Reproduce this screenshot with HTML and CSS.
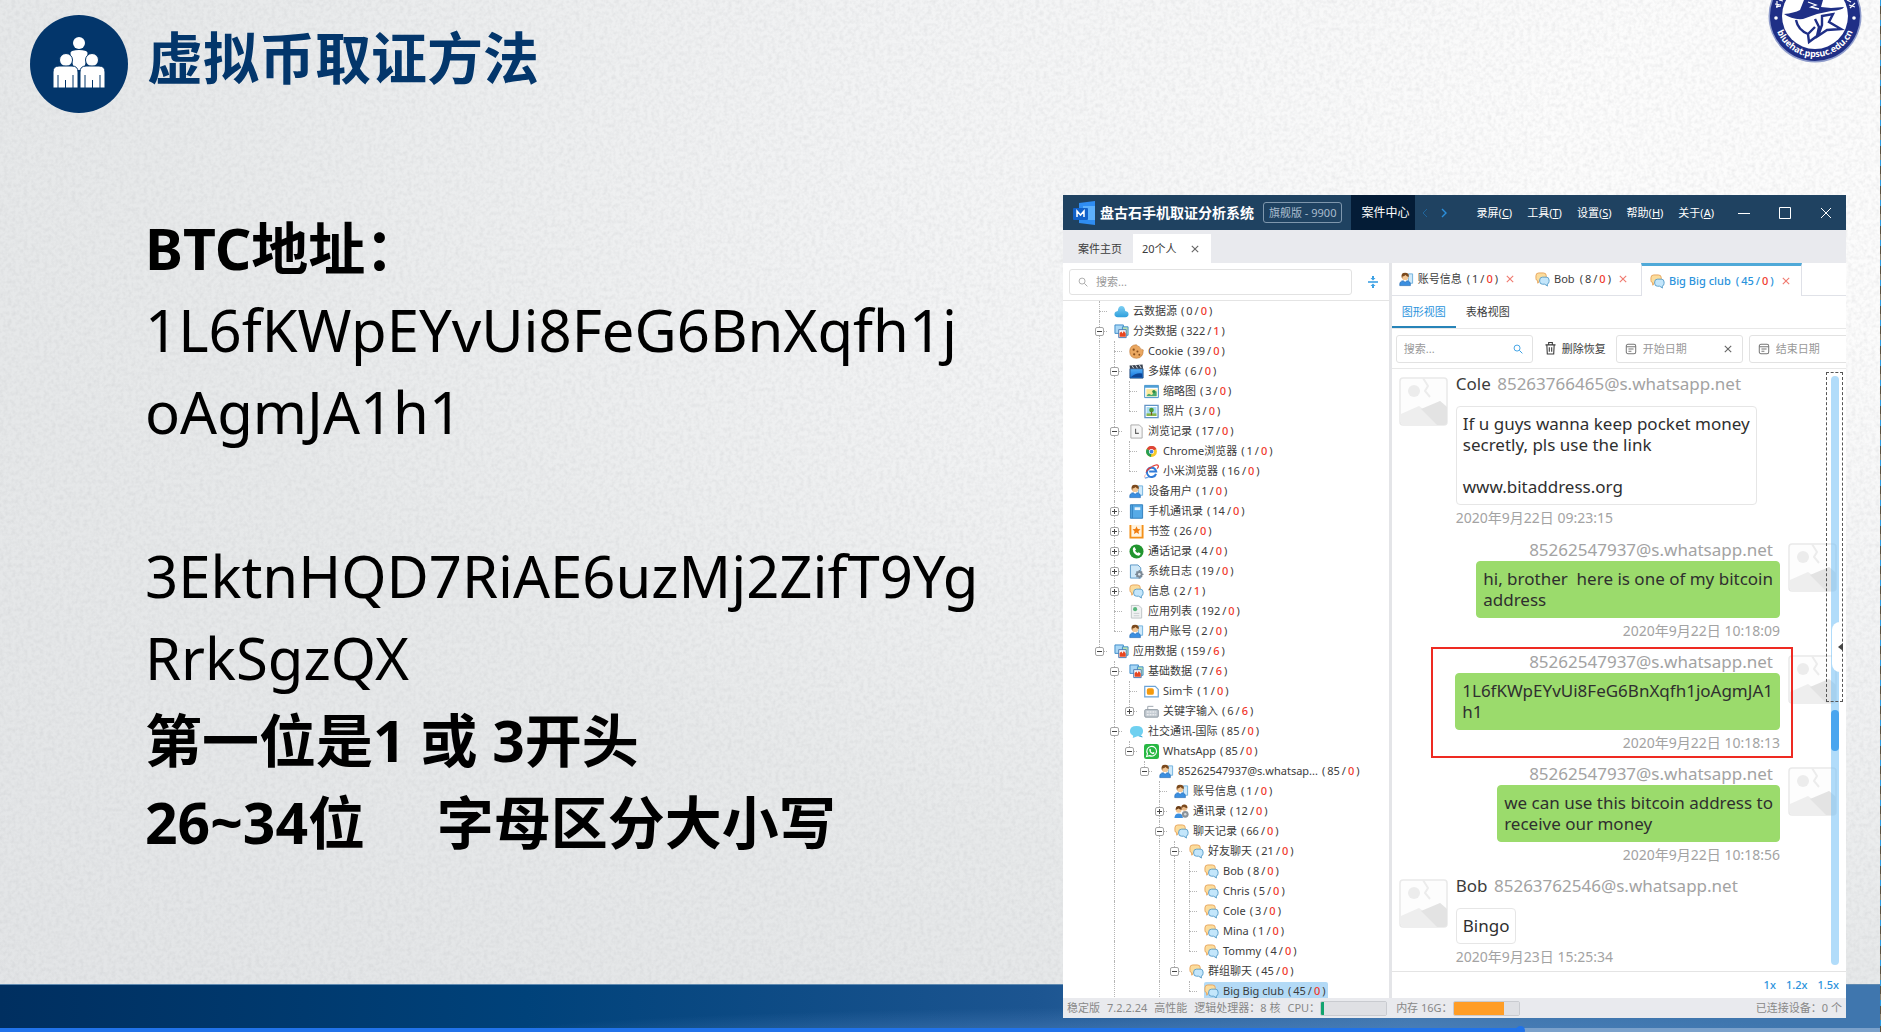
FILE: index.html
```html
<!DOCTYPE html>
<html lang="zh-CN">
<head>
<meta charset="utf-8">
<title>虚拟币取证方法</title>
<link rel="stylesheet" href="styles.css">
</head>
<body>
<svg class="sprite" aria-hidden="true">
  <defs>
    <linearGradient id="g-sky" x1="0" y1="0" x2="0" y2="1"><stop offset="0" stop-color="#7fd0f3"/><stop offset="1" stop-color="#2f9fdc"/></linearGradient>
    <linearGradient id="g-blue" x1="0" y1="0" x2="0" y2="1"><stop offset="0" stop-color="#55aef5"/><stop offset="1" stop-color="#1173dd"/></linearGradient>
  </defs>
  <symbol id="i-chat" viewBox="0 0 16 16"><path d="M4 1h5q3 0 3 3v3q0 2-2 2H5l-2 3-.3-3Q1 9 1 7V4q0-3 3-3z" fill="#fbdc9c" stroke="#e8a55c"/><path d="M8 5.500h4q3 0 3 3v1.500q0 2.500-2 2.800l.3 2.200-3-2H8q-3 0-3-3V8.500q0-3 3-3z" fill="#c3e6fb" stroke="#5b9fcb"/></symbol>
  <symbol id="i-user" viewBox="0 0 16 16"><path d="M10 2h4.500v10H10z" fill="#cfe9fa" stroke="#6fb1dd"/><circle cx="6.500" cy="5" r="3.600" fill="#f3c795"/><path d="M2.800 5.500Q2 .8 6.500.8t3.900 4.500Q8 5 7 3.300 5.500 5 3.600 4.800L3.500 7z" fill="#7b4a1e"/><path d="M.8 14.500q-.4-5 3.700-5.200L6.500 11l2-1.700q4 .2 3.700 5.200z" fill="#3b8fe0" stroke="#2169b4" stroke-width=".7"/></symbol>
  <symbol id="i-users" viewBox="0 0 16 16"><circle cx="11" cy="4" r="3.200" fill="#e9b987"/><path d="M7.800 4.500Q7.500.5 11 .5t3.300 4Q11 4 10.500 3z" fill="#7b4a1e"/><circle cx="5" cy="6" r="3.200" fill="#f3c795"/><path d="M1.800 6.500Q1.500 2 5 2t3.300 4.200Q6 6 5 4.800z" fill="#6b3d16"/><path d="M.5 15q0-5 4.500-5t4.500 5z" fill="#3b8fe0"/><circle cx="12" cy="11" r="3.600" fill="#8b9299"/><circle cx="12" cy="11" r="1.300" fill="#d4d8dc"/></symbol>
  <symbol id="i-cloud" viewBox="0 0 16 16"><path d="M4 14q-3.500 0-3.500-3T4 7.500Q4.500 2 8 2t4 5.500q3.500.5 3.500 3.500t-3.500 3z" fill="url(#g-sky)"/></symbol>
  <symbol id="i-data" viewBox="0 0 16 16"><path d="M1 1h9v9H1z" fill="#a9d7f5" stroke="#3c8ccb"/><path d="M9 3h6v9H9z" fill="#b9e3b5" stroke="#3c8ccb"/><path d="M5 6h8v8.500H5z" fill="#f3f6fa" stroke="#4a78b0"/><path d="M6 13.500V9.500L8 8l1 2 1.500-2.500L12.500 10v3.500z" fill="#e8461f"/></symbol>
  <symbol id="i-cookie" viewBox="0 0 16 16"><path d="M8 .8q1 2 3 2 .5 3 4.200 3.500 0 8.700-7.200 8.900Q.8 15 .8 8T8 .8z" fill="#eaa760" stroke="#c27a35" stroke-width=".7"/><g fill="#8a4f1c"><circle cx="5" cy="6" r="1.200"/><circle cx="9" cy="8" r="1.100"/><circle cx="5.500" cy="11" r="1.200"/><circle cx="11" cy="11.500" r="1"/></g></symbol>
  <symbol id="i-media" viewBox="0 0 16 16"><path d="M1 5h14v10H1z" fill="url(#g-blue)" stroke="#234a7c"/><path d="M.6 1.500 14.500.6 15 4.700H1z" fill="#3a4350"/><path d="M3 1.400 5 4.500M7 1.200l2 3.300M11 1l2 3.300" stroke="#dfe5ec"/><path d="M2 14q5-5 12-4v4z" fill="#0d4597"/></symbol>
  <symbol id="i-thumb" viewBox="0 0 16 16"><path d="M.7 1.500h14.600v13H.7z" fill="#fff" stroke="#3f8dc4"/><path d="M.7 1.500h14.600V4H.7z" fill="#4f9fd6"/><path d="M2.500 5.500h11v7.500h-11z" fill="#fbe99a"/><path d="M2.500 13q2-4 4-2t3-1 4-2v5z" fill="#4cab6e"/><circle cx="10.500" cy="8" r="1.700" fill="#2d8a44"/></symbol>
  <symbol id="i-photo" viewBox="0 0 16 16"><path d="M1 1.500h14v13H1z" fill="#fff" stroke="#6193c6" stroke-width="1.400"/><path d="M2.700 3.200h10.600v9.600H2.700z" fill="#a8dcf3"/><path d="M2.700 10h10.600v2.800H2.700z" fill="#88b84c"/><circle cx="8" cy="6.500" r="2.500" fill="#4d9b35"/><path d="M7.400 8h1.200v4H7.400z" fill="#7b5426"/></symbol>
  <symbol id="i-history" viewBox="0 0 16 16"><path d="M2 1h9l3 3v11H2z" fill="#f6f6f6" stroke="#a9a9a9"/><path d="M7 5v5h3.500" fill="none" stroke="#666" stroke-width="1.200"/></symbol>
  <symbol id="i-chrome" viewBox="0 0 16 16"><circle cx="8" cy="8" r="5.800" fill="#f7c928"/><path d="M8 8 2.900 5.200A5.800 5.800 0 0 1 13.200 5.400z" fill="#dd4437"/><path d="M8 8 2.900 5.200A5.800 5.800 0 0 0 7.500 13.800z" fill="#259e55"/><path d="M3 5.100A5.800 5.800 0 0 1 13.200 5.400H8z" fill="#dd4437"/><circle cx="8" cy="8" r="2.700" fill="#fff"/><circle cx="8" cy="8" r="2" fill="#3f7fe8"/></symbol>
  <symbol id="i-ie" viewBox="0 0 16 16"><path d="M12.800 10.500A5 5 0 1 1 13 8H5.500" fill="none" stroke="#2f7bd8" stroke-width="2.200"/><path d="M1 15Q-.5 11 5 6L10 2Q4 3 2.500 7T1 15z" fill="#e23c36"/><path d="M9 2.500Q14 0 15 1.500T14 5" stroke="#e23c36" stroke-width="1.300" fill="none"/><path d="M1 15q3 0 5-2" stroke="#2f7bd8" fill="none"/></symbol>
  <symbol id="i-book" viewBox="0 0 16 16"><path d="M1.500.8h13v14.400h-13z" fill="#56aae6" stroke="#2d7dbd"/><path d="M3.500 1v14" stroke="#2d7dbd"/><path d="M6 3.500h6v3H6z" fill="#e9f5fd"/></symbol>
  <symbol id="i-bookmark" viewBox="0 0 16 16"><path d="M1.500 1v13.500h13V1" fill="#fff3df" stroke="#f39019" stroke-width="2"/><path d="M8 2.500l1.300 2.800 3 .3-2.200 2 .6 3L8 9.100l-2.700 1.500.6-3-2.200-2 3-.3z" fill="#f07d10"/></symbol>
  <symbol id="i-call" viewBox="0 0 16 16"><circle cx="8" cy="8" r="7.500" fill="#21952f"/><path d="M4.500 4l1.500-.8L7.500 6 6.400 7q1 2 2.800 2.700l1-1 2.300 1.500q-.5 2.300-2.400 2.200Q4.500 11.500 4 5.600z" fill="#fff"/></symbol>
  <symbol id="i-log" viewBox="0 0 16 16"><path d="M1.500 1h8l3 3v11h-11z" fill="#cfe8f8" stroke="#5795c4"/><circle cx="11" cy="11" r="3.500" fill="#7c8996"/><path d="M11 6.500v9M6.500 11h9M8 8l6 6M14 8l-6 6" stroke="#7c8996" stroke-width="1.400"/><circle cx="11" cy="11" r="1.400" fill="#dfe6ec"/></symbol>
  <symbol id="i-app" viewBox="0 0 16 16"><path d="M2.500 1.500h8l3 3V15h-11z" fill="#f0f2f2" stroke="#bcc2c4"/><circle cx="6.500" cy="5.500" r="2.200" fill="#59b67c"/><path d="M5 10h6M5 12.500h6" stroke="#c8cdd0"/></symbol>
  <symbol id="i-sim" viewBox="0 0 16 16"><path d="M.8 2.500H12l3.200 3.300v8H.8z" fill="#fff" stroke="#6ba4d8" stroke-width="1.300"/><rect x="3" y="4.500" width="7.500" height="7" rx="2" fill="#f59a0c"/></symbol>
  <symbol id="i-keys" viewBox="0 0 16 16"><path d="M4 6V2.500h6" stroke="#9aa3ac" fill="none"/><rect x=".8" y="6" width="14.400" height="8" rx="1" fill="#c5ccd3" stroke="#8b959f"/><path d="M3 8.500h10M3 11.500h10" stroke="#fff" stroke-dasharray="2 1"/></symbol>
  <symbol id="i-social" viewBox="0 0 16 16"><path d="M8 2q7 0 7 5.500T9 13l-5 2 .5-2.600Q1 11 1 7.500 1 2 8 2z" fill="#6fd0f0"/><path d="M12 12q3 1 2.500 2.500L10 13z" fill="#3fb0dc"/></symbol>
  <symbol id="i-wa" viewBox="0 0 16 16"><rect width="16" height="16" rx="2.500" fill="#27b843"/><path d="M2.800 13.300l.9-3A5.200 5.200 0 1 1 6 12.400z" fill="none" stroke="#fff" stroke-width="1.200"/><path d="M5.800 5.200l1-.2.8 1.700-.6.8q.7 1.200 2 1.700l.8-.7 1.500.9q-.3 1.500-1.800 1.400Q6 10 5.600 6.400z" fill="#fff"/></symbol>
  <symbol id="i-search" viewBox="0 0 16 16"><circle cx="6.500" cy="6.500" r="4.800" fill="none" stroke="currentColor" stroke-width="1.500"/><path d="M10.200 10.200 15 15" stroke="currentColor" stroke-width="1.600"/></symbol>
  <symbol id="i-x" viewBox="0 0 10 10"><path d="M1 1l8 8M9 1 1 9" stroke="currentColor" stroke-width="1.400"/></symbol>
  <symbol id="i-cal" viewBox="0 0 14 14"><rect x="1.500" y="1.500" width="11" height="11" rx="2" fill="none" stroke="currentColor" stroke-width="1.200"/><path d="M1.500 4.500h11M4 7h6M4 9.500h3.500" stroke="currentColor" stroke-width="1.200"/></symbol>
  <symbol id="i-avatar" viewBox="0 0 49 49"><rect x="1" y="1" width="47" height="47" rx="3" fill="#fbfbfb" fill-opacity=".6" stroke="#e9e9e9" stroke-width="1.500"/><circle cx="15" cy="14" r="6" fill="#ececec"/><path d="M2 37l18-8 8 6 13-11 7 6v15q0 3-3 3H4q-2 0-2-3z" fill="#eeeeee"/><path d="M22 32l19-8 7 6v15q0 3-3 3h-7z" fill="#e3e3e3"/><path d="M24 1l5 8-3 5 5 6" fill="none" stroke="#ececec" stroke-width="2"/></symbol>
</svg>

<main class="slide">
  <svg class="grain" aria-hidden="true"><filter id="noise"><feTurbulence type="fractalNoise" baseFrequency="0.25" numOctaves="3" seed="4"/><feColorMatrix values="0 0 0 0 0.45  0 0 0 0 0.46  0 0 0 0 0.48  1.600 0 0 0 -0.600"/></filter><rect width="100%" height="100%" filter="url(#noise)"/></svg>

  <section class="lesson">
    <header class="heading">
      <svg class="badge" viewBox="0 0 98 98" aria-hidden="true">
        <circle cx="49" cy="49" r="49" fill="#03366b"/>
        <g fill="#fff">
          <circle cx="49" cy="28" r="6"/><path d="M42 36q7-2 14 0 2 1 1.500 3L55 50l-2 5h-8l-2-5-2.500-11q-.5-2 1.500-3z"/>
          <g stroke="#03366b" stroke-width="1"><circle cx="36" cy="45" r="6.500"/><circle cx="62" cy="45" r="6.500"/>
          <path d="M23 73V57q0-6 6-6h13q6 0 6 6v16z"/><path d="M50 73V57q0-6 6-6h13q6 0 6 6v16z"/></g>
        </g>
        <path d="M28 60v13M43 60v13M35.500 65v8M55 60v13M70 60v13M62.500 65v8" stroke="#03366b" stroke-width="1"/>
      </svg>
      <h1>虚拟币取证方法</h1>
    </header>
    <div class="notes">
      <p class="strong">BTC地址：</p>
      <p>1L6fKWpEYvUi8FeG6BnXqfh1j<br>oAgmJA1h1</p>
      <p class="gap">3EktnHQD7RiAE6uzMj2ZifT9Yg<br>RrkSgzQX</p>
      <p class="strong">第一位是1 或 3开头</p>
      <p class="strong">26~34位　&nbsp;字母区分大小写</p>
    </div>
  </section>

  <svg class="seal" viewBox="0 0 94 64" role="img" aria-label="bluehat.ppsuc.edu.cn">
    <circle cx="47" cy="16" r="46.500" fill="#8f9ccb"/><circle cx="47" cy="16" r="45" fill="#1f2f86"/><circle cx="47" cy="16" r="33" fill="#fff"/>
    <path id="ring" d="M6 16A41 41 0 0 0 88 16" fill="none"/>
    <text class="ring-text"><textPath href="#ring" startOffset="50%" text-anchor="middle">bluehat.ppsuc.edu.cn</textPath></text>
    <circle cx="8" cy="18" r="1.800" fill="#fff"/><circle cx="86" cy="18" r="1.800" fill="#fff"/>
    <path d="M7 4l6 1M8 7l5-1M9 1v7M81 5l6 2M82 8l5-5M11 0l4 1M79 0l4 2" stroke="#fff" stroke-width="1.200"/>
    <path d="M16 14q10-1 16-4l4-10h19l-2 7 10 1 13-1q-1 3-13 4l-14 3-14 5q-11 1-19-5z" fill="#1f2f86"/>
    <path d="M40 2l8 3-5 2 8 2" stroke="#fff" stroke-width="1.300" fill="none"/>
    <path d="M28 20q2 10 12 14l1 8 8-6 2-9-4-8M54 16l11-2-4 8 12 7-14 1-9 6 4-11zM40 34l7-7" fill="none" stroke="#1f2f86" stroke-width="2.400"/>
  </svg>

  <section class="app" aria-label="盘古石手机取证分析系统">
    <header class="titlebar">
      <svg class="app-logo" viewBox="0 0 24 24" aria-hidden="true"><path d="M6 2l16-2v24l-16-2z" fill="#2f8df2"/><path d="M10 5h12v14H10z" fill="#5db0fb"/><rect y="7" width="15" height="12" rx="1" fill="#1161c9"/><path d="M4 16V10l3.500 4L11 10v6" fill="none" stroke="#fff" stroke-width="1.500"/></svg>
      <strong class="app-name">盘古石手机取证分析系统</strong>
      <span class="edition">旗舰版 - 9900</span>
      <button class="center">案件中心</button>
      <button class="nav dim" aria-label="后退"><svg viewBox="0 0 6 10"><path d="M5 1 1 5l4 4" fill="none" stroke="currentColor"/></svg></button>
      <button class="nav" aria-label="前进"><svg viewBox="0 0 6 10"><path d="M1 1l4 4-4 4" fill="none" stroke="currentColor" stroke-width="1.400"/></svg></button>
      <nav class="menu">
        <button>录屏(<u>C</u>)</button><button>工具(<u>T</u>)</button><button>设置(<u>S</u>)</button><button>帮助(<u>H</u>)</button><button>关于(<u>A</u>)</button>
      </nav>
      <div class="controls">
        <button aria-label="最小化"><svg viewBox="0 0 12 12"><path d="M0 6.500h12" stroke="currentColor"/></svg></button>
        <button aria-label="最大化"><svg viewBox="0 0 12 12"><path d="M.5.5h11v11H.5z" fill="none" stroke="currentColor"/></svg></button>
        <button aria-label="关闭"><svg viewBox="0 0 12 12"><path d="M1 1l10 10M11 1 1 11" stroke="currentColor"/></svg></button>
      </div>
    </header>
    <div class="casebar">
      <button class="case">案件主页</button>
      <button class="case on">20个人 <svg class="x"><use href="#i-x"/></svg></button>
    </div>

    <div class="panes">
      <aside class="left">
        <div class="finder">
          <label class="field"><svg class="ic-s"><use href="#i-search"/></svg><input type="text" placeholder="搜索..." aria-label="搜索"></label>
          <button class="split" aria-label="折叠"><svg viewBox="0 0 12 14"><path d="M1 7h10" stroke="currentColor" stroke-width="1.600"/><path d="M6 1v3M6 13v-3" stroke="currentColor" stroke-width="2"/><path d="M3.500 3h5L6 5.500zM3.500 11h5L6 8.500z" fill="currentColor"/></svg></button>
        </div>
        <ul class="tree" id="tree"></ul>
      </aside>

      <section class="right">
        <div class="tabs">
          <button class="tab"><svg class="ic"><use href="#i-user"/></svg>账号信息<span class="count">(<span>1</span>/<b>0</b>)</span><svg class="x"><use href="#i-x"/></svg></button>
          <button class="tab"><svg class="ic"><use href="#i-chat"/></svg>Bob<span class="count">(<span>8</span>/<b>0</b>)</span><svg class="x"><use href="#i-x"/></svg></button>
          <button class="tab on"><svg class="ic"><use href="#i-chat"/></svg>Big Big club<span class="count">(<span>45</span>/<b>0</b>)</span><svg class="x"><use href="#i-x"/></svg></button>
        </div>
        <div class="views"><button class="view on">图形视图</button><button class="view">表格视图</button></div>
        <div class="tools">
          <label class="field query"><input type="text" placeholder="搜索..." aria-label="搜索消息"><svg class="ic-s"><use href="#i-search"/></svg></label>
          <button class="restore"><svg viewBox="0 0 12 14"><path d="M.5 3h11M4 2.500v-2h4v2M2 3l.5 10h7L10 3M4.700 5.500v5M7.300 5.500v5" fill="none" stroke="currentColor" stroke-width="1.200"/></svg>删除恢复</button>
          <label class="field date"><svg class="cal"><use href="#i-cal"/></svg><input type="text" placeholder="开始日期" aria-label="开始日期"><svg class="x"><use href="#i-x"/></svg></label>
          <label class="field date"><svg class="cal"><use href="#i-cal"/></svg><input type="text" placeholder="结束日期" aria-label="结束日期"><svg class="x"><use href="#i-x"/></svg></label>
        </div>
        <div class="chat">
          <article class="msg in">
            <svg class="avatar"><use href="#i-avatar"/></svg>
            <div class="body"><div class="from">Cole <span>85263766465@s.whatsapp.net</span></div>
            <p class="bubble">If u guys wanna keep pocket money<br>secretly, pls use the link<br><br>www.bitaddress.org</p><time>2020年9月22日 09:23:15</time></div>
          </article>
          <article class="msg out">
            <div class="body"><div class="from"><span>85262547937@s.whatsapp.net</span></div>
            <p class="bubble">hi, brother &nbsp;here is one of my bitcoin<br>address</p><time>2020年9月22日 10:18:09</time></div>
            <svg class="avatar"><use href="#i-avatar"/></svg>
          </article>
          <article class="msg out marked">
            <div class="body"><div class="from"><span>85262547937@s.whatsapp.net</span></div>
            <p class="bubble">1L6fKWpEYvUi8FeG6BnXqfh1joAgmJA1<br>h1</p><time>2020年9月22日 10:18:13</time></div>
            <svg class="avatar"><use href="#i-avatar"/></svg>
          </article>
          <article class="msg out">
            <div class="body"><div class="from"><span>85262547937@s.whatsapp.net</span></div>
            <p class="bubble">we can use this bitcoin address to<br>receive our money</p><time>2020年9月22日 10:18:56</time></div>
            <svg class="avatar"><use href="#i-avatar"/></svg>
          </article>
          <article class="msg in">
            <svg class="avatar"><use href="#i-avatar"/></svg>
            <div class="body"><div class="from">Bob <span>85263762546@s.whatsapp.net</span></div>
            <p class="bubble">Bingo</p><time>2020年9月23日 15:25:34</time></div>
          </article>
          <div class="scroll"><i class="notch"></i><i class="thumb"></i></div>
          <div class="focus"></div>
          <svg class="caret" viewBox="0 0 6 8"><path d="M5 0v8L0 4z" fill="#444"/></svg>
        </div>
        <div class="zoom"><button>1x</button><button>1.2x</button><button>1.5x</button></div>
      </section>
    </div>

    <footer class="status">
      <span>稳定版</span><span>7.2.2.24</span><span>高性能</span>
      <label for="cpu" class="wide">逻辑处理器：8 核</label><label for="cpu">CPU：</label><progress id="cpu" class="cpu" max="100" value="5"></progress>
      <label for="mem">内存 16G：</label><progress id="mem" class="mem" max="100" value="78"></progress>
      <span class="devices">已连接设备：0 个</span>
    </footer>
  </section>

  <div class="band"></div>
  <input class="seek" type="range" min="0" max="100" value="81" aria-label="播放进度">
  <div class="edge"></div>
</main>
<script src="tree.js"></script>
</body>
</html>
```
FILE: styles.css
```css
* { box-sizing: border-box; }
body { margin: 0; font-family: "Noto Sans", "Noto Sans CJK SC", sans-serif; color: #3c3c3c; }
button, input { font: inherit; color: inherit; border: 0; background: none; padding: 0; margin: 0; outline: 0; }
button { display: inline-flex; align-items: center; white-space: nowrap; }
p, h1, ul { margin: 0; padding: 0; }
svg { flex: none; }
.sprite { position: absolute; width: 0; height: 0; }

/* slide */
.slide {
  display: grid;
  grid-template-columns: 1063fr 783fr 35fr;
  grid-template-rows: minmax(0, 1fr) 44px 4px;
  height: 100vh;
  min-height: 900px;
  overflow: hidden;
  position: relative;
  background: radial-gradient(ellipse at 105% 15%, #fcfcfc 15%, #f2f3f4 40%, #e7e9ea 65%, #e2e4e6 100%);
}
.grain { position: absolute; inset: 0; width: 100%; height: 100%; opacity: .25; }
.lesson { grid-area: 1 / 1; position: relative; padding: 15px 0 0 30px; }
.heading { display: flex; gap: 19px; height: 98px; }
.badge { width: 98px; height: 98px; }
h1 { font: 700 56px/80px "Noto Sans CJK SC", sans-serif; color: #03366b; }
.notes { padding: 94px 0 0 115px; font-size: 58px; line-height: 82px; color: #000; white-space: nowrap; }
.notes .strong { font-weight: 700; font-size: 57px; }
.notes .gap { padding-top: 82px; }
.seal { position: absolute; top: 0; right: 19px; width: 94px; height: 64px; }
.ring-text { font: 700 9px "Noto Sans", sans-serif; fill: #fff; }
.band {
  grid-area: 2 / 1 / 4 / 4;
  position: relative;
  border-top: 1px solid #5f89b0;
  background: radial-gradient(ellipse at 62% 130%, rgba(90, 140, 200, .7), rgba(90, 140, 200, 0) 45%), linear-gradient(90deg, #002f60, #00427a 28%, #1c5591 55%, #3f76ae 75%, #3f76ae);
}
.seek {
  grid-area: 3 / 1 / 4 / 4;
  appearance: none;
  position: relative;
  width: 100%;
  height: 4px;
  background: linear-gradient(90deg, #2173ea 81%, #7ba1cb 81%);
}
.seek::-webkit-slider-thumb { appearance: none; width: 9px; height: 9px; border-radius: 50%; background: #2173ea; }
.edge { position: absolute; top: 0; right: 0; bottom: 0; width: 1px; background: repeating-linear-gradient(#2d9be0 0 6px, #5a5040 6px 14px, #8a8270 14px 20px); }

/* application window */
.app {
  grid-area: 1 / 2 / 3 / 3;
  position: relative;
  z-index: 1;
  display: flex;
  flex-direction: column;
  margin: 195px 0 10px;
  min-width: 0;
  background: #fff;
  font-size: 11px;
  line-height: 16px;
  overflow: hidden;
}
.titlebar { flex: none; display: flex; align-items: center; height: 35px; padding-left: 10px; background: #1f4261; color: #fff; }
.app-logo { width: 24px; height: 24px; margin-right: 3px; }
.app-name { font-size: 14px; white-space: nowrap; }
.edition { margin: 0 9px; padding: 0 5px; border: 1px solid #7f97ad; border-radius: 3px; font-size: 11px; line-height: 19px; color: #a9bccd; white-space: nowrap; }
.center { height: 100%; padding: 0 6px 0 10px; background: #041c36; font-size: 12px; }
.nav { padding: 0 6px; margin-left: 1px; color: #2b8fdc; }
.nav.dim { color: #1f659c; }
.nav svg { width: 6px; height: 10px; }
.menu { display: flex; gap: 15px; margin-left: auto; }
.menu u { text-underline-offset: 1px; }
.controls { display: flex; gap: 29px; margin: 0 14px 0 24px; }
.controls svg { width: 12px; height: 12px; }

.casebar { flex: none; display: flex; align-items: flex-end; height: 33px; padding-left: 7px; background: #e9eaee; }
.case { height: 29px; padding: 0 8px; }
.case.on { gap: 14px; padding: 0 12px 0 9px; background: #fff; margin-left: 3px; }
.x { width: 8px; height: 8px; color: #666; }

.panes { flex: 1; display: flex; min-height: 0; }
.left { flex: 327 1 0; display: flex; flex-direction: column; min-width: 0; }
.right { flex: 456 1 0; display: flex; flex-direction: column; min-width: 0; border-left: 3px solid #e4e5e8; }
.field { display: flex; align-items: center; border: 1px solid #e2e2e2; border-radius: 3px; background: #fff; }
.field input { flex: 1; min-width: 0; width: 0; }
.field input::placeholder { color: #999; opacity: 1; }
.ic-s { width: 10px; height: 10px; color: #aaa; }
.finder { flex: none; display: flex; align-items: center; height: 38px; padding: 0 10px 0 6px; gap: 15px; border-bottom: 1px solid #e4e4e4; }
.finder .field { flex: 1; height: 26px; padding: 0 8px; gap: 8px; }
.split { color: #3ba0e4; }
.split svg { width: 12px; height: 14px; }

/* evidence tree */
.tree { flex: 1; min-height: 0; overflow: hidden; list-style: none; padding-left: 36px; }
.node { display: flex; align-items: center; height: 20px; white-space: nowrap; }
.rail { position: relative; width: 15px; height: 20px; flex: none; }
.rail.pass::before, .rail.tee::before { content: ""; position: absolute; left: 0; top: 0; height: 20px; border-left: 1px dotted #b5b5b5; }
.rail.elbow::before { content: ""; position: absolute; left: 0; top: 0; height: 10px; border-left: 1px dotted #b5b5b5; }
.rail.tee::after, .rail.elbow::after { content: ""; position: absolute; left: 0; top: 10px; width: 8px; border-top: 1px dotted #b5b5b5; }
.toggle { position: absolute; z-index: 1; left: -4px; top: 6px; width: 9px; height: 9px; border: 1px solid #a5a5a5; border-radius: 2px; background: #fff; }
.toggle::before, .toggle.plus::after { content: ""; position: absolute; left: 1px; top: 3px; width: 5px; height: 1px; background: #444; }
.toggle.plus::after { left: 3px; top: 1px; width: 1px; height: 5px; }
.item { display: flex; align-items: center; height: 18px; }
.item.sel { background: #b3daf6; border-radius: 2px; padding-right: 2px; }
.ic { width: 15px; height: 15px; margin-right: 4px; }
.count { display: inline-flex; gap: 2px; margin-left: 4px; }
.count b { font-weight: 500; color: #f0382c; }

/* conversation tabs and tools */
.tabs { flex: none; display: flex; height: 33px; border-bottom: 1px solid #e0e2e8; }
.tab { padding: 0 8px 0 7px; margin-right: 6px; }
.tab .count { margin-left: 5px; }
.tab .x { color: #f07b70; margin-left: 8px; }
.tab.on { height: 33px; margin: 0; padding: 0 11px 0 8px; border: 1px solid #dfe1e8; border-top: 3px solid #4fa9d8; border-bottom: 0; background: #fff; color: #2b93dc; font-weight: 500; }
.tab.on .count { margin-left: 5px; }
.views { flex: none; display: flex; height: 33px; border-bottom: 1px solid #e8e8e8; }
.view { padding: 2px 10px 0; border-bottom: 2px solid transparent; }
.view.on { color: #2b93dc; border-color: #2784b8; }
.tools { flex: none; display: flex; align-items: center; height: 40px; padding-left: 4px; border-bottom: 1px solid #e8e8e8; overflow: hidden; }
.tools .field { height: 28px; flex: none; }
.query { width: 137px; padding: 0 9px 0 7px; }
.query .ic-s { color: #3ba0e4; }
.restore { margin: 0 10px 0 12px; gap: 6px; }
.restore svg { width: 11px; height: 13px; }
.date { width: 127px; padding: 0 10px 0 8px; gap: 6px; margin-right: 6px; }
.cal { width: 12px; height: 12px; color: #777; }

/* messages */
.chat { flex: 1; min-height: 0; position: relative; overflow: hidden; padding: 4px 9px 0 7px; font-size: 17px; line-height: 21px; }
.msg { display: flex; position: relative; }
.msg.in { gap: 8px; }
.msg.out { justify-content: flex-end; gap: 8px; height: 112px; }
.body { display: flex; flex-direction: column; align-items: flex-start; }
.out .body { align-items: flex-end; }
.from { line-height: 22px; }
.from span { color: #a3a3a3; }
.in .from span { margin-left: 2px; }
.out .from { padding-right: 7px; }
.bubble { padding: 6px 6px 7px; border: 1px solid #e6e6e6; border-radius: 4px; white-space: nowrap; color: #2f2f2f; }
.in .bubble { margin-top: 11px; }
.out .bubble { background: #9bdb6c; border-color: #9bdb6c; }
.body time { font-size: 14px; line-height: 26px; color: #a3a3a3; }
.avatar { width: 49px; height: 49px; margin-top: 4px; }
.msg.in + .msg.out { margin-top: 8px; }
.marked::before { content: ""; position: absolute; z-index: 1; top: -4px; right: 44px; width: 362px; height: 111px; border: 2px solid #ee2a22; box-sizing: border-box; }
.scroll { position: absolute; top: 7px; bottom: 6px; right: 7px; width: 8px; border-radius: 4px; background: rgba(125, 196, 247, .6); }
.thumb { position: absolute; left: 0; top: 334px; width: 8px; height: 41px; border-radius: 4px; background: #4aa5ef; }
.notch { position: absolute; left: 1px; top: 246px; width: 9px; height: 50px; border-radius: 8px 0 0 8px; background: #fff; }
.focus { position: absolute; top: 3px; right: 3px; width: 17px; height: 330px; border: 1px dashed #555; }
.caret { position: absolute; top: 274px; right: 2px; width: 6px; height: 8px; }
.zoom { flex: none; display: flex; align-items: center; justify-content: flex-end; gap: 10px; height: 27px; padding-right: 7px; border-top: 1px solid #e4e4e4; color: #2b93dc; font-weight: 500; }

.status { flex: none; display: flex; align-items: center; height: 20px; padding: 0 4px; background: #e9eaee; color: #888; white-space: nowrap; }
.status span, .status .wide { margin-right: 7px; }
progress { appearance: none; width: 67px; height: 15px; margin-right: 9px; border: 1px solid #c9cbd0; border-radius: 2px; overflow: hidden; }
progress::-webkit-progress-bar { background: #dfe0e4; }
.cpu::-webkit-progress-value { background: #12a36f; }
.mem::-webkit-progress-value { background: #ff9d26; }
.status .devices { margin: 0 0 0 auto; }
```
FILE: tree.js
```js
// level, last sibling, toggle, icon, label, count, deleted
const nodes = [
  [0, 0, '', 'cloud', '云数据源', 0, 0],
  [0, 0, '-', 'data', '分类数据', 322, 1],
  [1, 0, '', 'cookie', 'Cookie', 39, 0],
  [1, 0, '-', 'media', '多媒体', 6, 0],
  [2, 0, '', 'thumb', '缩略图', 3, 0],
  [2, 1, '', 'photo', '照片', 3, 0],
  [1, 0, '-', 'history', '浏览记录', 17, 0],
  [2, 0, '', 'chrome', 'Chrome浏览器', 1, 0],
  [2, 1, '', 'ie', '小米浏览器', 16, 0],
  [1, 0, '', 'user', '设备用户', 1, 0],
  [1, 0, '+', 'book', '手机通讯录', 14, 0],
  [1, 0, '+', 'bookmark', '书签', 26, 0],
  [1, 0, '+', 'call', '通话记录', 4, 0],
  [1, 0, '+', 'log', '系统日志', 19, 0],
  [1, 0, '+', 'chat', '信息', 2, 1],
  [1, 0, '', 'app', '应用列表', 192, 0],
  [1, 1, '', 'user', '用户账号', 2, 0],
  [0, 1, '-', 'data', '应用数据', 159, 6],
  [1, 0, '-', 'data', '基础数据', 7, 6],
  [2, 0, '', 'sim', 'Sim卡', 1, 0],
  [2, 1, '+', 'keys', '关键字输入', 6, 6],
  [1, 0, '-', 'social', '社交通讯-国际', 85, 0],
  [2, 1, '-', 'wa', 'WhatsApp', 85, 0],
  [3, 1, '-', 'user', '85262547937@s.whatsap...', 85, 0],
  [4, 0, '', 'user', '账号信息', 1, 0],
  [4, 0, '+', 'users', '通讯录', 12, 0],
  [4, 0, '-', 'chat', '聊天记录', 66, 0],
  [5, 0, '-', 'chat', '好友聊天', 21, 0],
  [6, 0, '', 'chat', 'Bob', 8, 0],
  [6, 0, '', 'chat', 'Chris', 5, 0],
  [6, 0, '', 'chat', 'Cole', 3, 0],
  [6, 0, '', 'chat', 'Mina', 1, 0],
  [6, 1, '', 'chat', 'Tommy', 4, 0],
  [5, 1, '-', 'chat', '群组聊天', 45, 0],
  [6, 1, '', 'chat', 'Big Big club', 45, 0]
];
const open = [];
document.getElementById('tree').innerHTML = nodes.map(([level, last, toggle, icon, label, count, deleted], i) => {
  let rails = '';
  for (let k = 0; k < level; k++) rails += `<span class="rail ${open[k] ? 'pass' : ''}"></span>`;
  open[level] = !last;
  const button = toggle ? `<button class="toggle ${toggle === '+' ? 'plus' : ''}" aria-label="${toggle === '+' ? '展开' : '收起'}"></button>` : '';
  rails += `<span class="rail ${last ? 'elbow' : 'tee'}">${button}</span>`;
  const selected = i === nodes.length - 1 ? ' sel' : '';
  return `<li class="node">${rails}<span class="item${selected}"><svg class="ic"><use href="#i-${icon}"/></svg>${label}<span class="count">(<span>${count}</span>/<b>${deleted}</b>)</span></span></li>`;
}).join('');
```
